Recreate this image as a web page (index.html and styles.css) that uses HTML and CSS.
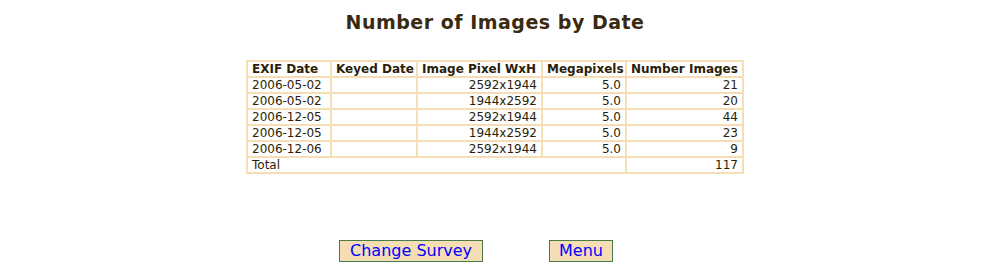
FILE: index.html
```html
<!DOCTYPE html>
<html>
<head>
<meta charset="utf-8">
<link rel="stylesheet" href="styles.css">
</head>
<body>
<h1 class="title">Number of Images by Date</h1>
<table class="grid">
<tr><th class="c1">EXIF Date</th><th class="c2">Keyed Date</th><th class="c3">Image Pixel WxH</th><th class="c4">Megapixels</th><th class="c5">Number Images</th></tr>
<tr><td>2006-05-02</td><td></td><td class="r">2592x1944</td><td class="r">5.0</td><td class="r">21</td></tr>
<tr><td>2006-05-02</td><td></td><td class="r">1944x2592</td><td class="r">5.0</td><td class="r">20</td></tr>
<tr><td>2006-12-05</td><td></td><td class="r">2592x1944</td><td class="r">5.0</td><td class="r">44</td></tr>
<tr><td>2006-12-05</td><td></td><td class="r">1944x2592</td><td class="r">5.0</td><td class="r">23</td></tr>
<tr><td>2006-12-06</td><td></td><td class="r">2592x1944</td><td class="r">5.0</td><td class="r">9</td></tr>
<tr><td colspan="4">Total</td><td class="r">117</td></tr>
</table>
<div class="actions">
<button class="btn">Change Survey</button>
<button class="btn btn-menu">Menu</button>
</div>
</body>
</html>
```
FILE: styles.css
```css
body {
  margin: 0;
  background: #fff;
  font-family: "DejaVu Sans", Verdana, sans-serif;
  color: #3a2a10;
}
.title {
  margin: 10px 0 0 0;
  text-align: center;
  font-size: 19px;
  line-height: 24px;
  font-weight: bold;
  color: #3a2a10;
  letter-spacing: 0.5px;
}
.grid {
  margin: 26px auto 0 auto;
  border-collapse: separate;
  border-spacing: 2px;
  background: #f5deb3;
  font-size: 12px;
  color: #2a1e08;
  table-layout: fixed;
  width: 498px;
}
.grid th, .grid td {
  background: #fff;
  padding: 0 4px;
  height: 14px;
  line-height: 14px;
  white-space: nowrap;
  text-align: left;
  overflow: hidden;
}
.grid th { font-weight: bold; }
.grid td.r { text-align: right; }
.grid .c1 { width: 74px; }
.grid .c2 { width: 76px; }
.grid .c3 { width: 115px; }
.grid .c4 { width: 74px; }
.grid .c5 { width: 107px; }
.actions {
  display: flex;
  justify-content: center;
  gap: 66px;
  margin-top: 66px;
  padding-right: 38px;
}
.btn {
  font-family: "DejaVu Sans", Verdana, sans-serif;
  font-size: 16px;
  color: #0000ff;
  background: #f5deb3;
  border: 1px solid #4a7a4a;
  padding: 1px 10px 1px 10px;
  line-height: 18px;
  margin: 0;
}
.btn-menu {
  padding: 1px 9px 1px 9px;
}
```
